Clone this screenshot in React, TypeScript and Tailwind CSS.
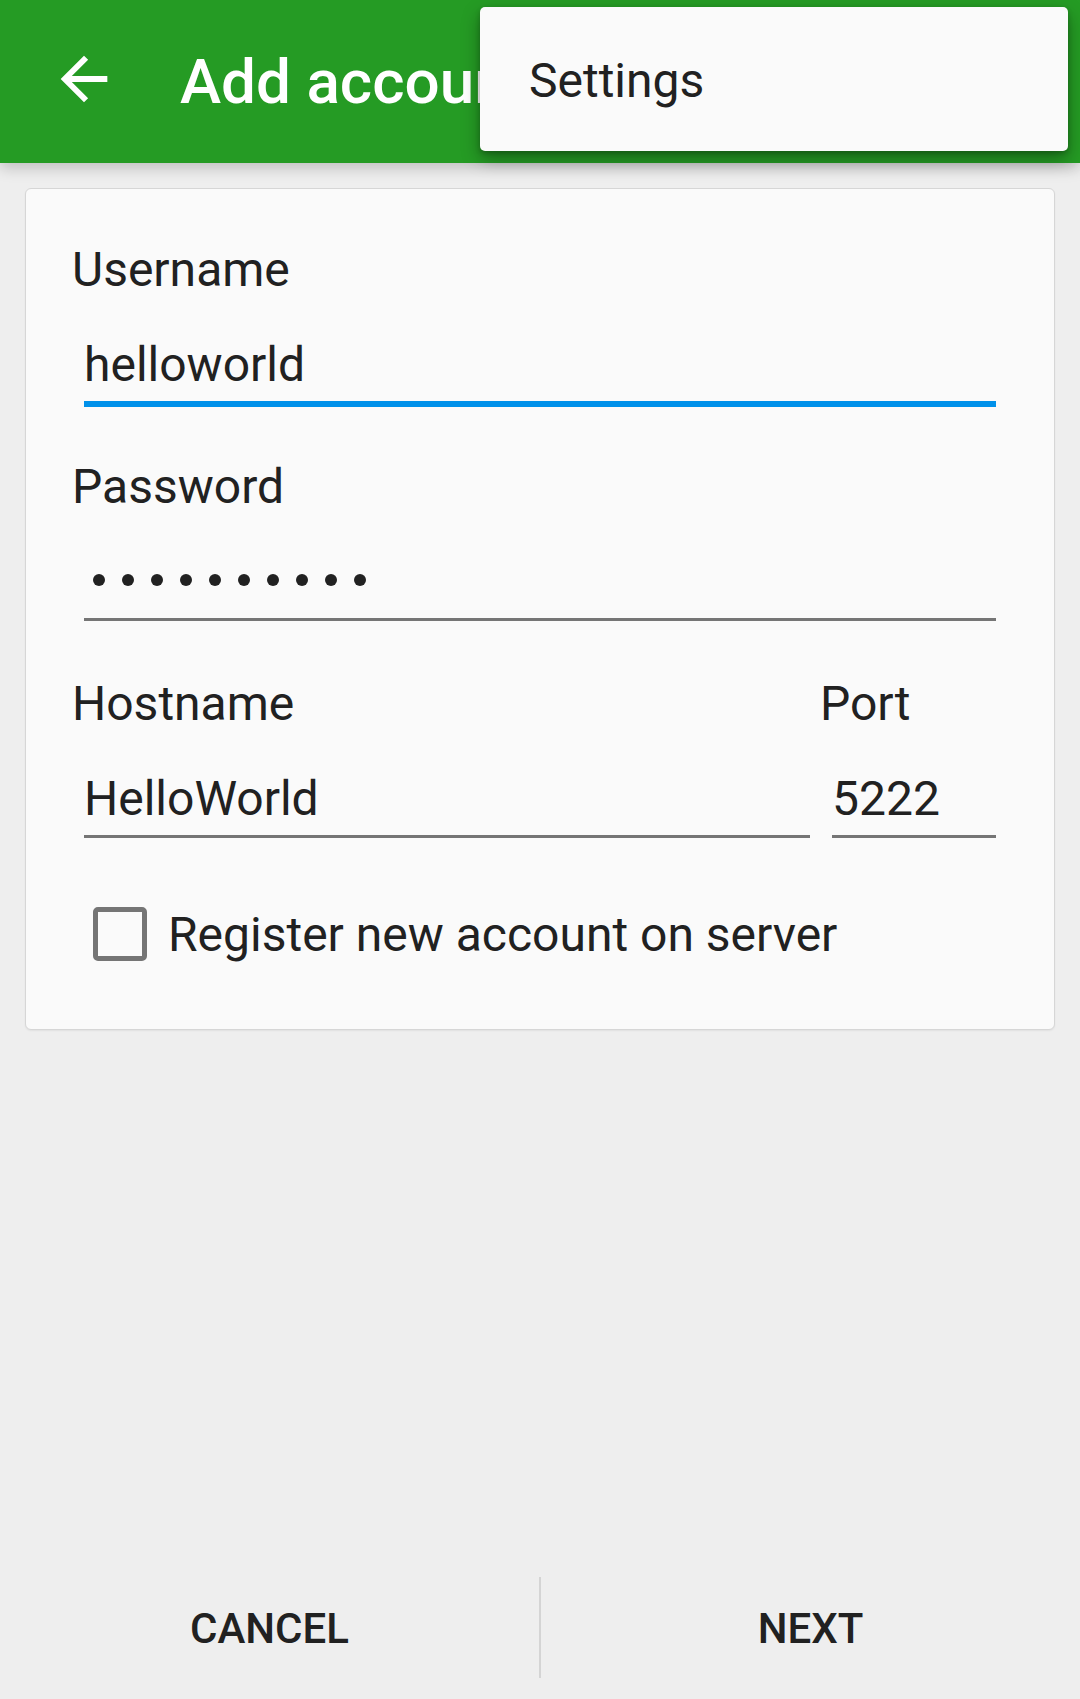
import React from "react";

function BackArrow() {
  return (
    <svg viewBox="0 0 24 24" className="w-[70px] h-[70px] fill-white">
      <path d="M20 11H7.83l5.59-5.59L12 4l-8 8 8 8 1.41-1.41L7.83 13H20v-2z" />
    </svg>
  );
}

function Underline({ active }: { active?: boolean }) {
  return (
    <div className="h-[6px]">
      {active ? (
        <div className="h-[6px] bg-[#0091ea]" />
      ) : (
        <div className="h-[3px] bg-[#757575]" />
      )}
    </div>
  );
}

function Field({ label, children, active }: { label: string; children: React.ReactNode; active?: boolean }) {
  return (
    <div>
      <div className="h-[56px] leading-[56px] text-[48px] text-[#212121]">{label}</div>
      <div className="ml-[12px] mt-[39px]">
        <div className="h-[56px] leading-[56px] text-[48px] text-[#212121]">{children}</div>
        <div className="mt-[8px]">
          <Underline active={active} />
        </div>
      </div>
    </div>
  );
}

export default function App() {
  return (
    <div className="relative w-[1080px] h-[1699px] overflow-hidden bg-[#eeeeee] flex flex-col font-['Roboto','Liberation_Sans',sans-serif]">
      <header className="relative z-10 h-[163px] shrink-0 bg-[#259b24] flex items-center pl-[49px] shadow-[0_5px_14px_rgba(0,0,0,0.2)]">
        <div className="mb-[5px]">
          <BackArrow />
        </div>
        <h1 className="ml-[61px] text-[62px] leading-[72px] font-medium text-white whitespace-nowrap">Add account</h1>
      </header>

      <div className="absolute z-20 top-[7px] left-[480px] w-[588px] h-[144px] bg-[#fafafa] rounded-[5px] flex items-center pl-[49px] pt-[4px] shadow-[0_8px_18px_rgba(0,0,0,0.35),0_2px_5px_rgba(0,0,0,0.2)]">
        <span className="text-[48px] leading-[56px] text-[#212121]">Settings</span>
      </div>

      <main className="mt-[25px] mx-[25px] bg-[#fafafa] border border-[#d6d6d6] rounded-[6px] pl-[46px] pr-[58px] pt-[53px] pb-[66px] shadow-[0_1px_2px_rgba(0,0,0,0.06)]">
        <Field label="Username" active>
          helloworld
        </Field>

        <div className="mt-[52px]">
          <Field label="Password">
            <div className="h-[56px] pb-[4px] pl-[9px] flex items-center gap-[17px]">
              {Array.from({ length: 10 }).map((_, i) => (
                <span key={i} className="w-[12px] h-[12px] rounded-full bg-[#212121]" />
              ))}
            </div>
          </Field>
        </div>

        <div className="mt-[52px] flex gap-[10px]">
          <div className="flex-1">
            <Field label="Hostname">HelloWorld</Field>
          </div>
          <div className="w-[176px]">
            <Field label="Port">5222</Field>
          </div>
        </div>

        <label className="mt-[66px] ml-[21px] flex items-start">
          <span className="w-[54px] h-[54px] shrink-0 border-[5px] border-[#757575] rounded-[5px]" />
          <span className="ml-[21px] text-[48px] leading-[56px] text-[#212121]">Register new account on server</span>
        </label>
      </main>

      <div className="flex-1" />

      <footer className="h-[144px] shrink-0 flex items-center">
        <button className="flex-1 h-full flex items-center justify-center pt-[3px] text-[42px] leading-[50px] font-medium text-[#212121]">
          CANCEL
        </button>
        <div className="w-[2px] h-[101px] bg-[#d4d4d4]" />
        <button className="flex-1 h-full flex items-center justify-center pt-[3px] text-[42px] leading-[50px] font-medium text-[#212121]">
          NEXT
        </button>
      </footer>
    </div>
  );
}
